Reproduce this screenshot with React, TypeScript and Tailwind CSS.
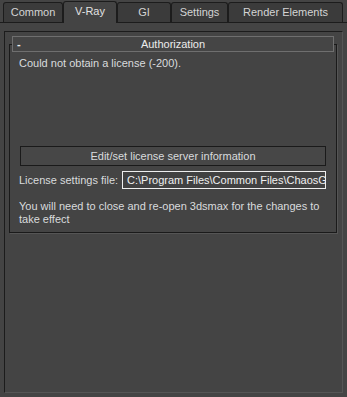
import React from "react";

const tabs = [
  { label: "Common", w: 60 },
  { label: "V-Ray", w: 54, active: true },
  { label: "GI", w: 54 },
  { label: "Settings", w: 57 },
  { label: "Render Elements", w: 115 },
];

export default function App() {
  return (
    <div
      className="w-[347px] h-[397px] bg-[#444444] text-[#d9dbdd] text-[11px] flex flex-col overflow-hidden"
      style={{ fontFamily: '"Liberation Sans", Arial, sans-serif' }}
    >
      {/* Tabs */}
      <div className="h-[23px] flex items-end pl-[3px] border-b border-[#1c1c1c] shrink-0">
        {tabs.map((t) =>
          t.active ? (
            <div
              key={t.label}
              className="h-[22px] -mb-px flex items-center justify-center rounded-t-[3px] border border-b-0 border-[#1c1c1c] bg-[#444444] text-[#e2e2e2] relative z-10"
              style={{ width: t.w }}
            >
              <span className="pb-[2px]">{t.label}</span>
            </div>
          ) : (
            <div
              key={t.label}
              className="h-[20px] flex items-center justify-center rounded-t-[3px] border border-b-0 border-[#1c1c1c] bg-[#3b3b3b] text-[#d4d4d4]"
              style={{ width: t.w }}
            >
              <span>{t.label}</span>
            </div>
          )
        )}
      </div>

      {/* Pane */}
      <div className="flex-1 flex flex-col pl-[4px] pr-[4px] pt-[8px] pb-[4px]">
        <div className="flex-1 border-l border-t border-[#1c1c1c] border-r border-b border-r-[#555555] border-b-[#555555] pl-[4px] pr-[5px] pt-[4px]">
          {/* Rollout header */}
          <div className="relative z-10 mx-[3px] h-[16px] border border-[#6f6f6f] bg-[#454545] flex items-center text-[#ececec]">
            <span className="absolute left-[4px] top-[1px] leading-[12px] font-bold">-</span>
            <span className="flex-1 text-center leading-[14px]">Authorization</span>
          </div>
          {/* Rollout frame */}
          <div className="-mt-[8px] border border-[#1a1a1a] pl-[9px] pr-[10px] pt-[12px] pb-[6px] shadow-[1px_1px_0_#555555]">
            <div className="leading-[13px]">Could not obtain a license (-200).</div>
            <div className="h-[76px]" />
            <div className="h-[20px] border border-[#1a1a1a] bg-[#474747] flex items-center justify-center ml-px">
              Edit/set license server information
            </div>
            <div className="mt-[5px] flex items-center gap-[7px]">
              <span className="w-[96px] whitespace-nowrap">License settings file:</span>
              <div className="flex-1 h-[18px] border border-[#eeeeee] bg-[#414141] flex items-center pl-[4px] overflow-hidden whitespace-nowrap text-[#f0f0f0]">
                C:\Program Files\Common Files\ChaosGroup\vrlclient.xml
              </div>
            </div>
            <div className="mt-[11px] leading-[13px]">
              You will need to close and re-open 3dsmax for the changes to
              <br />
              take effect
            </div>
          </div>
        </div>
      </div>
    </div>
  );
}
